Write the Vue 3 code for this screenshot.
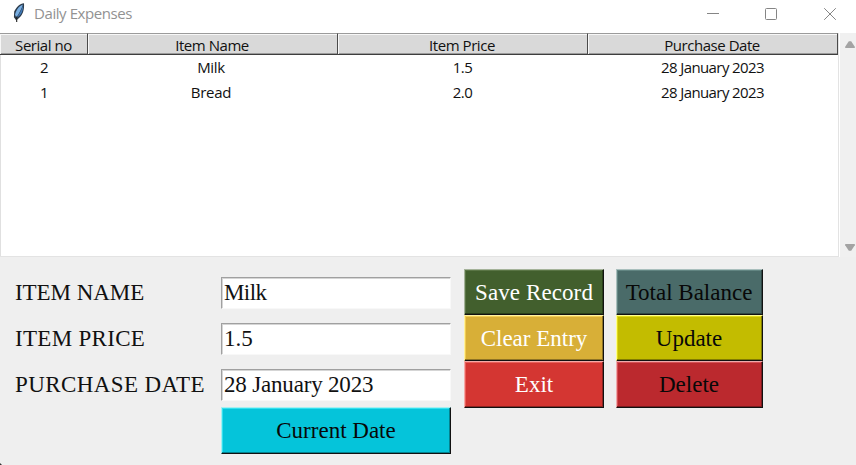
<script setup>
import { ref } from 'vue'

const columns = ['Serial no', 'Item Name', 'Item Price', 'Purchase Date']
const rows = [
  ['2', 'Milk', '1.5', '28 January 2023'],
  ['1', 'Bread', '2.0', '28 January 2023'],
]
const fields = ref([
  { label: 'ITEM NAME', value: 'Milk', cls: 'l-name', vcls: 'v-name' },
  { label: 'ITEM PRICE', value: '1.5', cls: 'l-price', vcls: 'v-price' },
  { label: 'PURCHASE DATE', value: '28 January 2023', cls: 'l-date', vcls: 'v-date' },
])
const primary = [
  { text: 'Save Record', cls: 'save' },
  { text: 'Clear Entry', cls: 'clear' },
  { text: 'Exit', cls: 'exit' },
]
const secondary = [
  { text: 'Total Balance', cls: 'total' },
  { text: 'Update', cls: 'update' },
  { text: 'Delete', cls: 'delete' },
]
</script>

<template>
  <div class="window">
    <header class="titlebar">
      <svg class="feather" width="14" height="22" viewBox="0 0 14 22">
        <path d="M12 1.2 C8 1.6 4.3 5 2.2 9.6 L1.9 15.2 L4.3 18.6 L7 16 C11 12.8 12.5 7.5 12 1.2Z" fill="#2b3a4a" />
        <path d="M10.9 2.4 C7 3.8 4.2 7.6 3 12.6 L4.2 15.4 C7 11.8 9.2 7.4 10.9 2.4Z" fill="#78aee2" />
        <path d="M11.1 3.5 C9.3 8.5 7.2 12 4.8 15.8 C9.4 13 11.3 9 11.1 3.5Z" fill="#3f79b8" />
        <path d="M4.6 14.5 L4.7 20" stroke="#252525" stroke-width="1.1" />
      </svg>
      <span class="title">Daily Expenses</span>
      <svg class="controls" width="136" height="28" viewBox="0 0 136 28" fill="none" stroke="#858585">
        <path d="M7 13.5H19" />
        <rect x="65.5" y="8.5" width="11" height="11" rx="1" />
        <path d="M124.2 8.2L135.8 19.8M135.8 8.2L124.2 19.8" />
      </svg>
    </header>

    <section class="records">
      <div class="table">
        <div class="row head">
          <div v-for="c in columns" :key="c" class="cell"><span>{{ c }}</span></div>
        </div>
        <div v-for="r in rows" :key="r[0]" class="row body">
          <div v-for="(v, i) in r" :key="i" class="cell" :class="{ name: i === 1 }"><span>{{ v }}</span></div>
        </div>
      </div>
      <div class="scrollbar">
        <svg width="12" height="9" viewBox="0 0 12 9"><path d="M1.2 8H10.8V6.7L7.2 1.3H4.8L1.2 6.7Z" fill="#a3a3a3" /></svg>
        <svg width="12" height="9" viewBox="0 0 12 9"><path d="M1.2 1H10.8V2.3L7.2 7.7H4.8L1.2 2.3Z" fill="#a3a3a3" /></svg>
      </div>
    </section>

    <section class="form">
      <div class="labels">
        <div v-for="f in fields" :key="f.label" class="slot"><span :class="f.cls">{{ f.label }}</span></div>
      </div>
      <div class="entries">
        <div v-for="f in fields" :key="f.label" class="slot">
          <div class="entry"><span :class="f.vcls">{{ f.value }}</span></div>
        </div>
        <button class="btn current"><span>Current Date</span></button>
      </div>
      <div class="group one">
        <button v-for="b in primary" :key="b.text" class="btn" :class="b.cls"><span>{{ b.text }}</span></button>
      </div>
      <div class="group two">
        <button v-for="b in secondary" :key="b.text" class="btn" :class="b.cls"><span>{{ b.text }}</span></button>
      </div>
      <i class="corner"></i>
    </section>
  </div>
</template>

<style>
body { margin: 0; overflow: hidden; background: #efefef; }
</style>

<style scoped>
* { box-sizing: border-box; }
.window { width: 856px; height: 465px; background: #efefef; font-family: "Open Sans", "Noto Sans", sans-serif; color: #111; overflow: hidden; display: flex; flex-direction: column; }
.titlebar { flex: none; height: 33px; background: #fff; display: flex; align-items: flex-start; padding-left: 12px; }
.feather { margin-top: 2px; }
.title { margin-left: 8px; font-size: 15px; line-height: 27px; color: #929292; letter-spacing: -0.42px; white-space: nowrap; }
.controls { margin-left: auto; margin-right: 20px; }
.records { flex: none; display: flex; height: 224px; background: #fff; }
.table { width: 839px; border-right: 1px solid #e3e3e3; border-bottom: 1px solid #e3e3e3; box-shadow: inset 1px 0 #e0e0e0; }
.row { display: grid; grid-template-columns: 88px 250px 250px 250px; font-size: 15px; letter-spacing: -0.6px; }
.head { letter-spacing: -0.45px; width: 838px; }
.cell { display: flex; align-items: center; justify-content: center; white-space: nowrap; }
.body .cell:nth-child(n+2), .head .cell:nth-child(n+2) { padding-right: 1px; }
.body .cell.name { padding-right: 4px; letter-spacing: -0.3px; }
.head .cell { height: 22px; background: #d9d9d9; border-top: 1px solid #9b9b9b; border-right: 1px solid #4b4b4b; border-bottom: 1px solid #3e3e3e; box-shadow: inset 1px 1px #f7f7f7, inset 0 -1px #9b9b9b; padding-top: 1px; }
.body .cell { height: 25px; padding-bottom: 2px; }
.scrollbar { width: 16px; margin-left: 1px; background: #f0f0f0; display: flex; flex-direction: column; justify-content: space-between; align-items: flex-end; padding: 7px 0 5px; }
.form { flex: 1; position: relative; display: flex; padding: 12px 0 0 15px; font-family: "Liberation Serif", serif; font-size: 23px; }
.labels { width: 206px; color: #111; }
.slot { height: 46px; display: flex; align-items: center; white-space: nowrap; }
.labels .slot { padding-top: 1px; }
.l-name { letter-spacing: -0.05px; }
.l-price { letter-spacing: 0.3px; }
.l-date { letter-spacing: 0.4px; }
.entries { width: 230px; }
.entry { width: 230px; height: 32px; margin-top: 1px; background: #fff; border: 1px solid; border-color: #a0a0a0 #f8f8f8 #f8f8f8 #a0a0a0; box-shadow: inset 1px 1px #d5d5d5; display: flex; align-items: center; padding-left: 1px; }
.v-name { letter-spacing: -0.6px; padding-left: 1px; }
.v-price { padding-left: 1px; letter-spacing: 0; }
.v-date { padding-left: 1px; letter-spacing: -0.18px; }
.btn { display: flex; align-items: center; justify-content: center; width: 100%; height: 47px; margin: 0; padding: 1px 0 0; border: 1px solid; border-color: var(--hi) #111 #111 var(--hi); box-shadow: inset -1px -1px var(--lo), inset 1px 1px var(--mid); border-radius: 0; font: inherit; white-space: nowrap; color: #080808; background: var(--bg); }
.group { display: flex; flex-direction: column; }
.group .btn + .btn { margin-top: -1px; }
.group .btn:not(:last-child) { border-bottom-width: 2px; padding-top: 2px; }
.one { width: 140px; margin-left: 13px; }
.two { width: 147px; margin-left: 12px; }
.two .btn { padding-right: 1px; }
.current { --bg: #05c4da; --hi: #a8eff0; --mid: #31e0ef; --lo: #03828f; }
.save { --bg: #425f2d; --hi: #a5b39a; --mid: #5a7545; --lo: #29401a; color: #fff; letter-spacing: 0.1px; }
.clear { --bg: #d8af37; --hi: #fff3a0; --mid: #f2cc52; --lo: #8e7324; color: #fff; }
.exit { --bg: #d43632; --hi: #f5aaa7; --mid: #e95f5a; --lo: #8c2421; color: #fff; }
.total { --bg: #4a6b69; --hi: #a9bfbd; --mid: #628582; --lo: #304745; }
.update { --bg: #c3bc00; --hi: #ffff90; --mid: #e0da18; --lo: #817c00; }
.delete { --bg: #bb292e; --hi: #eeaaac; --mid: #d65055; --lo: #7b1b1f; }
.corner { position: absolute; left: 0; bottom: 0; width: 2px; height: 2px; background: #333; clip-path: polygon(0 0, 100% 100%, 0 100%); }
</style>
